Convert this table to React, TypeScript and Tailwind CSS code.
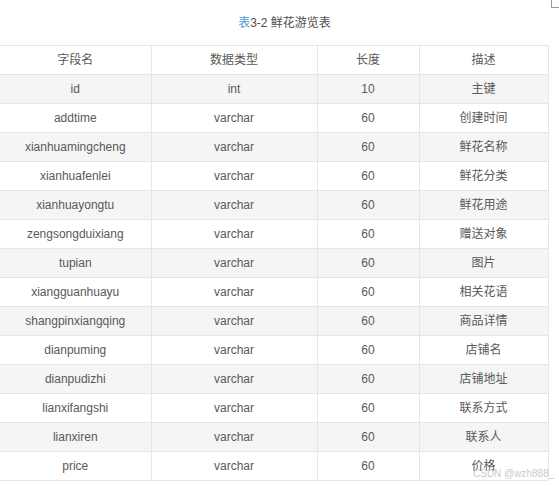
import clsx from 'clsx'

type Row = { name: string; type: string; len: string; desc: string }

const rows: Row[] = [
  { name: 'id', type: 'int', len: '10', desc: '主键' },
  { name: 'addtime', type: 'varchar', len: '60', desc: '创建时间' },
  { name: 'xianhuamingcheng', type: 'varchar', len: '60', desc: '鲜花名称' },
  { name: 'xianhuafenlei', type: 'varchar', len: '60', desc: '鲜花分类' },
  { name: 'xianhuayongtu', type: 'varchar', len: '60', desc: '鲜花用途' },
  { name: 'zengsongduixiang', type: 'varchar', len: '60', desc: '赠送对象' },
  { name: 'tupian', type: 'varchar', len: '60', desc: '图片' },
  { name: 'xiangguanhuayu', type: 'varchar', len: '60', desc: '相关花语' },
  { name: 'shangpinxiangqing', type: 'varchar', len: '60', desc: '商品详情' },
  { name: 'dianpuming', type: 'varchar', len: '60', desc: '店铺名' },
  { name: 'dianpudizhi', type: 'varchar', len: '60', desc: '店铺地址' },
  { name: 'lianxifangshi', type: 'varchar', len: '60', desc: '联系方式' },
  { name: 'lianxiren', type: 'varchar', len: '60', desc: '联系人' },
  { name: 'price', type: 'varchar', len: '60', desc: '价格' },
]

const cell = 'h-[29px] border-r border-[#e6e6e6] text-center align-middle p-0'

export default function App() {
  return (
    <div
      className="relative w-[559px] h-[486px] bg-white overflow-hidden text-[12px] text-[#595959]"
      style={{ fontFamily: '"Liberation Sans", "Noto Sans CJK SC", sans-serif' }}
    >
      <div className="absolute right-0 top-0 w-[8px] h-[8px] border-l border-b border-[#9a9a9a]" />

      <div className="h-[45px] flex items-center justify-center pl-[10px] text-[12px] text-[#4d4d4d]">
        <span className="text-[#4ea1db]">表</span>
        <span>3-2 鲜花游览表</span>
      </div>

      <table className="w-[548px] border-collapse table-fixed border-t border-b border-[#e6e6e6]">
        <colgroup>
          <col className="w-[151px]" />
          <col className="w-[166px]" />
          <col className="w-[102px]" />
          <col className="w-[129px]" />
        </colgroup>
        <thead>
          <tr className="border-b border-[#e6e6e6] bg-white">
            <th className={clsx(cell, 'font-normal')}>字段名</th>
            <th className={clsx(cell, 'font-normal')}>数据类型</th>
            <th className={clsx(cell, 'font-normal')}>长度</th>
            <th className={clsx(cell, 'font-normal')}>描述</th>
          </tr>
        </thead>
        <tbody>
          {rows.map((r, i) => (
            <tr
              key={r.name}
              className={clsx('border-b border-[#e6e6e6]', i % 2 === 0 ? 'bg-[#f5f5f5]' : 'bg-white')}
            >
              <td className={cell}>{r.name}</td>
              <td className={cell}>{r.type}</td>
              <td className={cell}>{r.len}</td>
              <td className={cell}>{r.desc}</td>
            </tr>
          ))}
        </tbody>
      </table>

      <div className="absolute left-[473px] top-[469px] whitespace-nowrap text-[10px] text-[#cbcbcb] leading-none">
        CSDN @wzh888_
      </div>
    </div>
  )
}
